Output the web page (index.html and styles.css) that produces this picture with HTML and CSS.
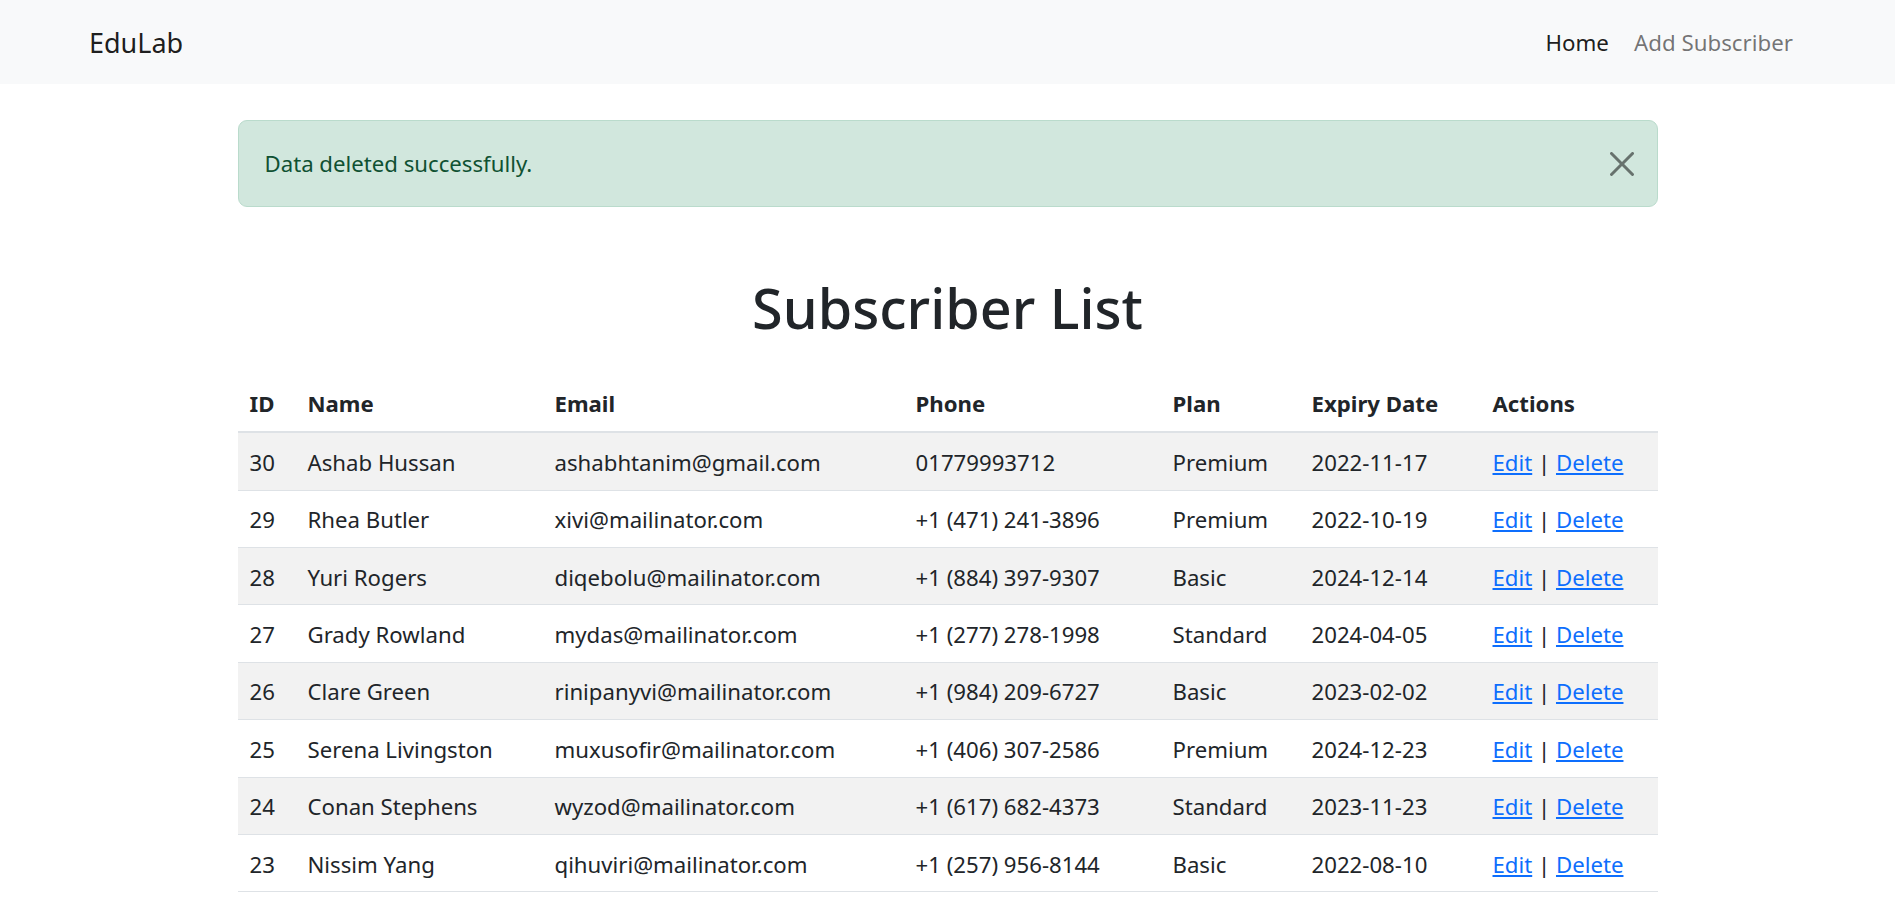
FILE: index.html
```html
<!DOCTYPE html>
<html lang="en">
<head>
<meta charset="utf-8">
<title>EduLab - Subscriber List</title>
<link rel="stylesheet" href="styles.css">
</head>
<body>
<nav class="navbar">
  <a class="brand" href="#">EduLab</a>
  <div class="nav-links">
    <a class="nav-link active" href="#">Home</a>
    <a class="nav-link" href="#">Add Subscriber</a>
  </div>
</nav>
<main class="container">
  <div class="alert">
    <span>Data deleted successfully.</span>
    <button class="close" aria-label="Close">
      <svg width="24" height="24" viewBox="0 0 16 16"><path d="M.293.293a1 1 0 0 1 1.414 0L8 6.586 14.293.293a1 1 0 1 1 1.414 1.414L9.414 8l6.293 6.293a1 1 0 0 1-1.414 1.414L8 9.414l-6.293 6.293a1 1 0 0 1-1.414-1.414L6.586 8 .293 1.707a1 1 0 0 1 0-1.414z" fill="currentColor"/></svg>
    </button>
  </div>
  <h1 class="title">Subscriber List</h1>
  <table class="table">
    <colgroup>
      <col class="c-id"><col class="c-name"><col class="c-email"><col class="c-phone"><col class="c-plan"><col class="c-date"><col class="c-act">
    </colgroup>
    <thead>
      <tr><th>ID</th><th>Name</th><th>Email</th><th>Phone</th><th>Plan</th><th>Expiry Date</th><th>Actions</th></tr>
    </thead>
    <tbody>
      <tr><td>30</td><td>Ashab Hussan</td><td>ashabhtanim@gmail.com</td><td>01779993712</td><td>Premium</td><td>2022-11-17</td><td><a href="#">Edit</a> | <a href="#">Delete</a></td></tr>
      <tr><td>29</td><td>Rhea Butler</td><td>xivi@mailinator.com</td><td>+1 (471) 241-3896</td><td>Premium</td><td>2022-10-19</td><td><a href="#">Edit</a> | <a href="#">Delete</a></td></tr>
      <tr><td>28</td><td>Yuri Rogers</td><td>diqebolu@mailinator.com</td><td>+1 (884) 397-9307</td><td>Basic</td><td>2024-12-14</td><td><a href="#">Edit</a> | <a href="#">Delete</a></td></tr>
      <tr><td>27</td><td>Grady Rowland</td><td>mydas@mailinator.com</td><td>+1 (277) 278-1998</td><td>Standard</td><td>2024-04-05</td><td><a href="#">Edit</a> | <a href="#">Delete</a></td></tr>
      <tr><td>26</td><td>Clare Green</td><td>rinipanyvi@mailinator.com</td><td>+1 (984) 209-6727</td><td>Basic</td><td>2023-02-02</td><td><a href="#">Edit</a> | <a href="#">Delete</a></td></tr>
      <tr><td>25</td><td>Serena Livingston</td><td>muxusofir@mailinator.com</td><td>+1 (406) 307-2586</td><td>Premium</td><td>2024-12-23</td><td><a href="#">Edit</a> | <a href="#">Delete</a></td></tr>
      <tr><td>24</td><td>Conan Stephens</td><td>wyzod@mailinator.com</td><td>+1 (617) 682-4373</td><td>Standard</td><td>2023-11-23</td><td><a href="#">Edit</a> | <a href="#">Delete</a></td></tr>
      <tr><td>23</td><td>Nissim Yang</td><td>qihuviri@mailinator.com</td><td>+1 (257) 956-8144</td><td>Basic</td><td>2022-08-10</td><td><a href="#">Edit</a> | <a href="#">Delete</a></td></tr>
    </tbody>
  </table>
</main>
</body>
</html>
```

FILE: styles.css
```css
* { box-sizing: border-box; }
body {
  margin: 0;
  font-family: "Noto Sans", "Open Sans", sans-serif;
  font-size: 22.2px;
  color: #212529;
  background: #fff;
}
.navbar {
  height: 84px;
  background: #f8f9fa;
  display: flex;
  align-items: center;
  justify-content: space-between;
  padding: 0 102px 0 89px;
}
.brand {
  font-size: 27px;
  color: rgba(0,0,0,.9);
  text-decoration: none;
}
.nav-links { display: flex; gap: 25px; }
.nav-link {
  color: rgba(0,0,0,.55);
  text-decoration: none;
  font-size: 22.3px;
}
.nav-link.active { color: rgba(0,0,0,.9); }
.container {
  width: 1420px;
  margin: 0 auto;
}
.alert {
  margin-top: 36px;
  height: 87px;
  background: #d1e7dd;
  border: 1px solid #badbcc;
  border-radius: 9px;
  color: #0f5132;
  display: flex;
  align-items: center;
  justify-content: space-between;
  padding: 0 23px 0 26px;
}
.close {
  background: none;
  border: 0;
  padding: 0;
  color: #000;
  opacity: .5;
  display: flex;
}
.title {
  margin: 64px 0 0;
  font-size: 55.7px;
  font-weight: 500;
  line-height: 72px;
  text-align: center;
}
.table {
  margin-top: 30.6px;
  width: 100%;
  border-collapse: collapse;
  table-layout: fixed;
}
.c-id { width: 58px; }
.c-name { width: 247px; }
.c-email { width: 361px; }
.c-phone { width: 257px; }
.c-plan { width: 139px; }
.c-date { width: 181px; }
.c-act { width: 177px; }
.table th, .table td {
  text-align: left;
  padding: 11.7px 12px 8.7px;
  line-height: 36px;
  white-space: nowrap;
}
.table th { font-weight: 700; border-bottom: 2px solid #dee2e6; padding-top: 12.7px; padding-bottom: 9px; }
.table td { border-bottom: 1px solid #dee2e6; }
.table tbody tr:nth-child(odd) td { background: #f2f2f2; }
.table a { color: #0d6efd; }
```
